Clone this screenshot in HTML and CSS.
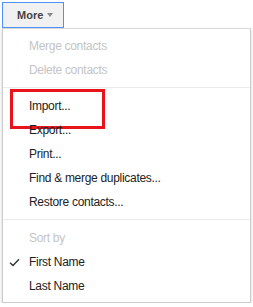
FILE: index.html
```html
<!DOCTYPE html>
<html lang="en">
<head>
  <meta charset="UTF-8">
  <title>More menu</title>
  <link rel="stylesheet" href="styles.css">
</head>
<body>
  <div class="toolbar">
    <button class="more-btn">More <span class="caret"></span></button>
  </div>

  <ul class="menu">
    <li class="item disabled">Merge contacts</li>
    <li class="item disabled">Delete contacts</li>
    <li class="sep"></li>
    <li class="item highlight">Import...</li>
    <li class="item">Export...</li>
    <li class="item">Print...</li>
    <li class="item">Find &amp; merge duplicates...</li>
    <li class="item">Restore contacts...</li>
    <li class="sep"></li>
    <li class="item header">Sort by</li>
    <li class="item checked">
      <svg class="check" width="11" height="9" viewBox="0 0 11 9">
        <path d="M1 4.8 L4 7.6 L10 1.2" fill="none" stroke="#333" stroke-width="1.4"/>
      </svg>
      First Name
    </li>
    <li class="item">Last Name</li>
  </ul>
</body>
</html>
```

FILE: styles.css
```css
* {
  margin: 0;
  padding: 0;
  box-sizing: border-box;
}

html {
  background-color: #fff;
}

body {
  font-family: "Liberation Sans", Arial, sans-serif;
  font-size: 12px;
  color: #222;
  padding: 2px 2px 0;
}

.toolbar {
  display: flex;
}

.more-btn {
  display: flex;
  align-items: center;
  width: 62px;
  height: 26px;
  padding-left: 14px;
  font-family: inherit;
  font-size: 11px;
  font-weight: 700;
  color: #444;
  background-color: #f1f1f1;
  border: 1px solid #4d90fe;
}

.caret {
  display: inline-block;
  margin-left: 4px;
  border-left: 3px solid transparent;
  border-right: 3px solid transparent;
  border-top: 4px solid #888;
}

.menu {
  list-style: none;
  width: 249px;
  padding: 5px 0 4px;
  border: 1px solid #ccc;
  border-top-color: #d9d9d9;
  box-shadow: 0 2px 3px rgba(0, 0, 0, 0.2);
}

.item {
  position: relative;
  height: 24px;
  line-height: 24px;
  padding-left: 26px;
  white-space: nowrap;
  letter-spacing: -0.3px;
  color: #222;
}

.item.disabled,
.item.header {
  color: #c4c4c4;
}

.sep {
  height: 1px;
  margin: 5px 0 6px;
  background-color: #ebebeb;
}

.highlight::after {
  content: "";
  position: absolute;
  left: 7px;
  top: -5px;
  width: 89px;
  height: 34px;
  border: 3px solid #e8141b;
}

.check {
  position: absolute;
  left: 6px;
  top: 8px;
}
```
